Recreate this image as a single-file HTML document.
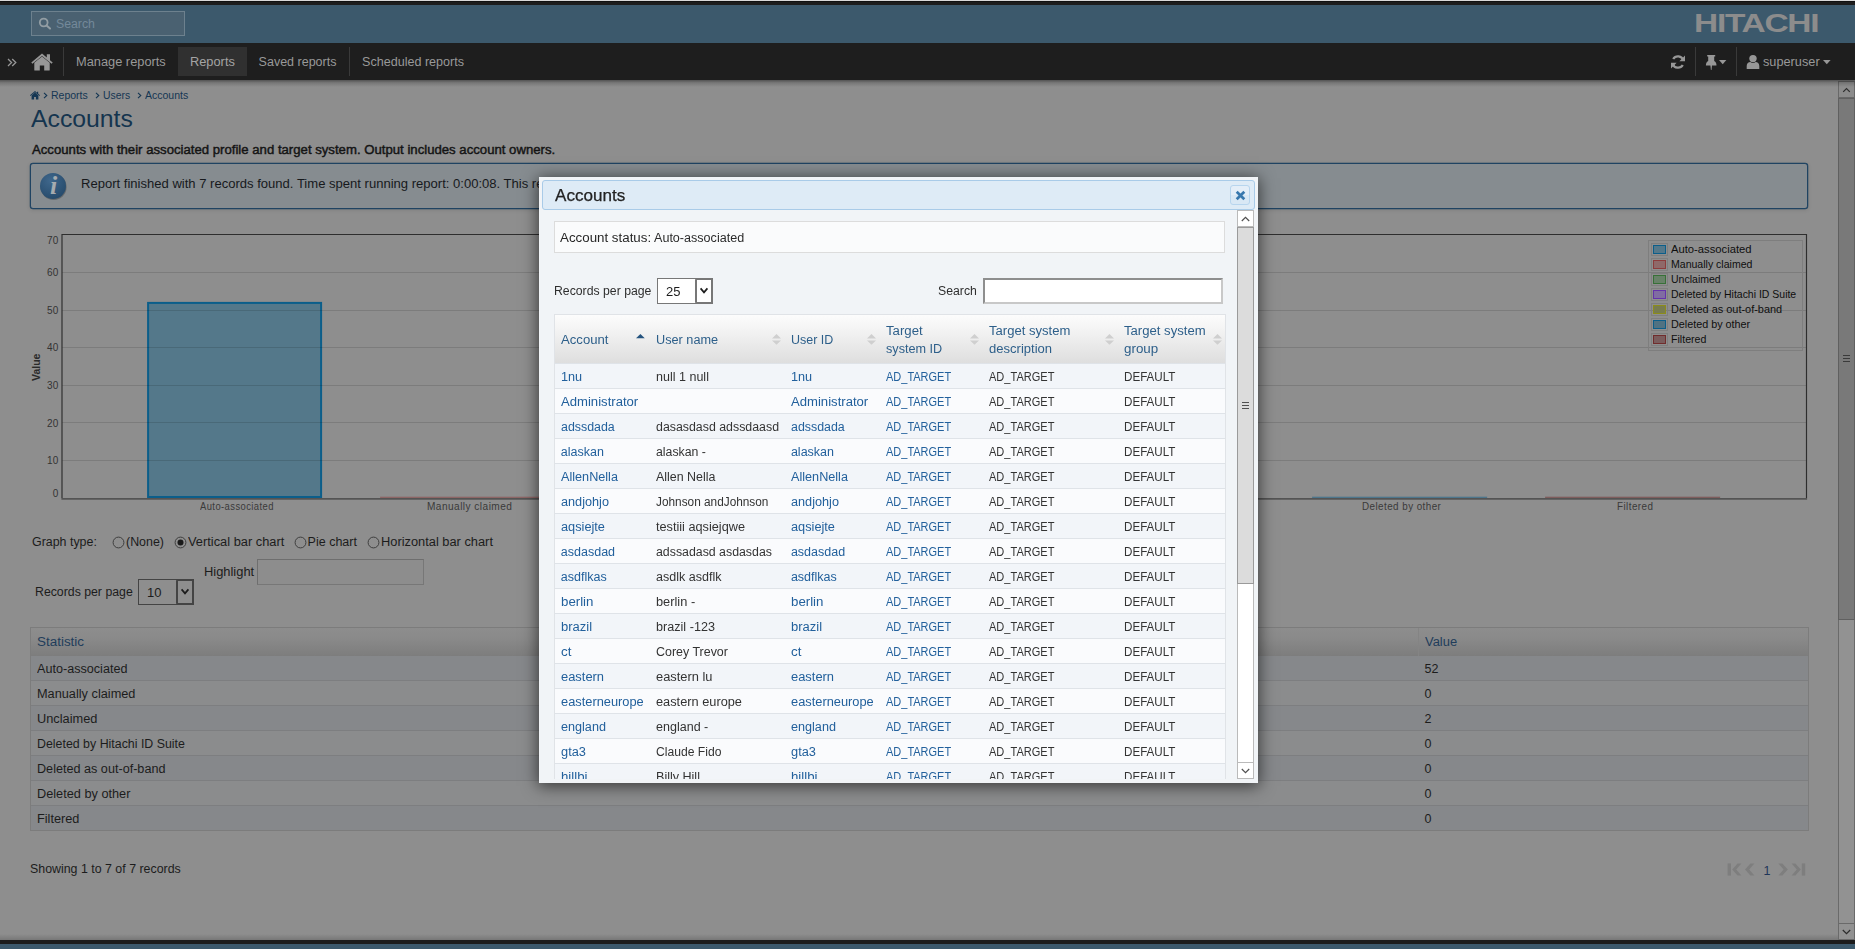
<!DOCTYPE html><html lang="en"><head><meta charset="utf-8"><title>Accounts</title><style>
html,body{margin:0;padding:0}
body{width:1855px;height:949px;overflow:hidden;position:relative;background:#8e8e8e;font-family:"Liberation Sans",sans-serif}
.t{position:absolute;white-space:nowrap;line-height:normal;transform-origin:0 0;display:block}
</style></head><body>
<div style="position:absolute;left:0px;top:0px;width:1855px;height:1px;background:#d9d9d9"></div>
<div style="position:absolute;left:0px;top:1px;width:1855px;height:4px;background:linear-gradient(#111 25%,#1d1d1d 25%)"></div>
<div style="position:absolute;left:0px;top:5px;width:1855px;height:38px;background:#3c596c"></div>
<div style="position:absolute;left:31px;top:11px;width:154px;height:25px;box-sizing:border-box;border:1px solid #6d818e;background:#4a6171"></div>
<svg style="position:absolute;left:38px;top:17px;" width="14" height="13" viewBox="0 0 14 13"><circle cx="5.7" cy="5.5" r="3.9" fill="none" stroke="#929da3" stroke-width="1.8"/><path d="M8.6 8.4 L12 11.6" stroke="#929da3" stroke-width="2" stroke-linecap="round"/></svg>
<span class="t" style="left:56.12px;top:17.00px;font-family:'Liberation Sans',sans-serif;font-size:12.5px;font-weight:400;color:#74899a;transform:scaleX(0.9834);">Search</span>
<span class="t" style="left:1694.21px;top:8.00px;font-family:'Liberation Sans',sans-serif;font-size:26.2px;font-weight:700;color:#8c8c8c;letter-spacing:-1px;transform:scaleX(1.2774);">HITACHI</span>
<div style="position:absolute;left:0px;top:43px;width:1855px;height:37px;background:#1e1e1e"></div>
<svg style="position:absolute;left:7px;top:58px;" width="10" height="9" viewBox="0 0 10 9"><path d="M1 1 L4.6 4.5 L1 8 M5.2 1 L8.8 4.5 L5.2 8" fill="none" stroke="#979797" stroke-width="1.3"/></svg>
<svg style="position:absolute;left:31px;top:53px;" width="22" height="18" viewBox="0 0 22 18"><path fill="#979797" d="M11 3.4 L3.3 9.8 V17 a.6 .6 0 0 0 .6 .6 H8.8 V12.4 H13.2 V17.6 H18.1 a.6 .6 0 0 0 .6 -.6 V9.8 Z"/><path fill="#979797" d="M11 .6 L.3 9.5 L1.4 10.8 L11 2.9 L20.6 10.8 L21.7 9.5 L19 7.2 V1.3 H15.8 V4.6 Z"/></svg>
<div style="position:absolute;left:63px;top:47px;width:1px;height:29px;background:#3a3a3a"></div>
<span class="t" style="left:75.92px;top:55.00px;font-family:'Liberation Sans',sans-serif;font-size:12.5px;font-weight:400;color:#999;transform:scaleX(1.0250);">Manage reports</span>
<div style="position:absolute;left:178px;top:47px;width:69px;height:29px;background:#303030"></div>
<span class="t" style="left:189.82px;top:55.00px;font-family:'Liberation Sans',sans-serif;font-size:12.5px;font-weight:400;color:#a4a4a4;transform:scaleX(1.0244);">Reports</span>
<span class="t" style="left:258.62px;top:55.00px;font-family:'Liberation Sans',sans-serif;font-size:12.5px;font-weight:400;color:#999;">Saved reports</span>
<div style="position:absolute;left:349px;top:47px;width:1px;height:29px;background:#3a3a3a"></div>
<span class="t" style="left:361.62px;top:55.00px;font-family:'Liberation Sans',sans-serif;font-size:12.5px;font-weight:400;color:#999;transform:scaleX(1.0059);">Scheduled reports</span>
<svg style="position:absolute;left:1670px;top:54px;" width="16" height="16" viewBox="0 0 16 16"><g fill="none" stroke="#979797" stroke-width="2.3"><path d="M13.3 6.2 A5.6 5.6 0 0 0 3.2 5.0"/><path d="M2.7 9.8 A5.6 5.6 0 0 0 12.8 11.0"/></g><path fill="#979797" d="M15 1.6 V7.2 H9.4 Z M1 14.4 V8.8 H6.6 Z"/></svg>
<div style="position:absolute;left:1695px;top:47px;width:1px;height:29px;background:#3a3a3a"></div>
<svg style="position:absolute;left:1705px;top:55px;" width="12" height="15" viewBox="0 0 12 15"><path fill="#979797" d="M2.2 0 H10.2 V1.5 H9.2 V6 C10.8 6.8 11.5 8.4 11.5 10.6 H7 L6.5 15 H5.9 L5.4 10.6 H.9 C.9 8.4 1.6 6.8 3.2 6 V1.5 H2.2 Z"/></svg>
<svg style="position:absolute;left:1719px;top:60px;" width="8" height="5" viewBox="0 0 8 5"><path fill="#979797" d="M0 0 H7.4 L3.7 4.2 Z"/></svg>
<div style="position:absolute;left:1736px;top:47px;width:1px;height:29px;background:#3a3a3a"></div>
<svg style="position:absolute;left:1746px;top:54px;" width="14" height="16" viewBox="0 0 14 16"><circle cx="7" cy="4.6" r="3.7" fill="#979797"/><path fill="#979797" d="M.7 15 V12 C.7 9.4 2.4 8 4.4 8 C5.2 8.7 6 9 7 9 C8 9 8.8 8.7 9.6 8 C11.6 8 13.3 9.4 13.3 12 V15 Z"/></svg>
<span class="t" style="left:1763.03px;top:55.00px;font-family:'Liberation Sans',sans-serif;font-size:12.5px;font-weight:400;color:#999;transform:scaleX(1.0190);">superuser</span>
<svg style="position:absolute;left:1823px;top:60px;" width="8" height="5" viewBox="0 0 8 5"><path fill="#979797" d="M0 0 H7.6 L3.8 4.2 Z"/></svg>
<svg style="position:absolute;left:30px;top:91px;" width="10" height="9" viewBox="0 0 10 9"><path fill="#153653" d="M5 1.6 L1.6 4.5 V8.4 H4.1 V5.9 H5.9 V8.4 H8.4 V4.5 Z"/><path fill="#153653" d="M5 .1 L0 4.3 L.6 5 L5 1.3 L9.4 5 L10 4.3 L8.2 2.8 V.7 H7 V1.8 Z"/></svg>
<svg style="position:absolute;left:42.5px;top:92px;" width="5" height="7" viewBox="0 0 5 7"><path d="M1 .8 L3.8 3.5 L1 6.2" fill="none" stroke="#153653" stroke-width="1.1"/></svg>
<span class="t" style="left:50.87px;top:89.00px;font-family:'Liberation Sans',sans-serif;font-size:11px;font-weight:400;color:#153653;transform:scaleX(0.9550);">Reports</span>
<svg style="position:absolute;left:94.5px;top:92px;" width="5" height="7" viewBox="0 0 5 7"><path d="M1 .8 L3.8 3.5 L1 6.2" fill="none" stroke="#153653" stroke-width="1.1"/></svg>
<span class="t" style="left:102.97px;top:89.00px;font-family:'Liberation Sans',sans-serif;font-size:11px;font-weight:400;color:#153653;transform:scaleX(0.9430);">Users</span>
<svg style="position:absolute;left:136.5px;top:92px;" width="5" height="7" viewBox="0 0 5 7"><path d="M1 .8 L3.8 3.5 L1 6.2" fill="none" stroke="#153653" stroke-width="1.1"/></svg>
<span class="t" style="left:144.67px;top:89.00px;font-family:'Liberation Sans',sans-serif;font-size:11px;font-weight:400;color:#153653;transform:scaleX(0.9546);">Accounts</span>
<span class="t" style="left:31.48px;top:105.00px;font-family:'Liberation Sans',sans-serif;font-size:24px;font-weight:400;color:#15354f;transform:scaleX(1.0319);">Accounts</span>
<span class="t" style="left:31.83px;top:143.00px;font-family:'Liberation Sans',sans-serif;font-size:12.5px;font-weight:400;color:#141414;-webkit-text-stroke:.42px #141414;transform:scaleX(1.0532);">Accounts with their associated profile and target system. Output includes account owners.</span>
<div style="position:absolute;left:30px;top:163px;width:1778px;height:46px;box-sizing:border-box;border:1px solid #1f4362;border-radius:3px;background:#868c90;box-shadow:0 0 0 .25px #1f4362,0 1px 4px rgba(0,0,0,.12)"></div>
<svg style="position:absolute;left:39px;top:172px;" width="28" height="28" viewBox="0 0 28 28"><defs><radialGradient id="ig" cx=".4" cy=".3" r=".8"><stop offset="0" stop-color="#3f678c"/><stop offset="1" stop-color="#244868"/></radialGradient></defs><circle cx="14.6" cy="15" r="13" fill="rgba(0,0,0,.25)"/><circle cx="14" cy="14" r="13" fill="url(#ig)"/><text x="14.6" y="22" text-anchor="middle" font-family="Liberation Serif,serif" font-style="italic" font-weight="700" font-size="26" fill="#a6abaf">i</text></svg>
<span class="t" style="left:80.83px;top:177.00px;font-family:'Liberation Sans',sans-serif;font-size:12.5px;font-weight:400;color:#16191c;transform:scaleX(1.0438);">Report finished with 7 records found. Time spent running report: 0:00:08. This report has been saved and can be viewed again later.</span>
<svg style="position:absolute;left:0px;top:0px;" width="1855" height="949" viewBox="0 0 1855 949"><rect x="148.1" y="302.9" width="173" height="194.1" fill="#54788a" stroke="#0b5e8a" stroke-width="2"/><rect x="380.1" y="496.7" width="175" height="1.4" fill="#8c3c3c" opacity=".5"/><rect x="614.1" y="490.5" width="173" height="6.5" fill="#688268" stroke="#377037" stroke-width="2"/><rect x="846.1" y="496.7" width="175" height="1.4" fill="#6432aa" opacity=".5"/><rect x="1079.1" y="496.7" width="175" height="1.4" fill="#8c8c19" opacity=".5"/><rect x="1312.1" y="496.7" width="175" height="1.4" fill="#0c5e8a" opacity=".5"/><rect x="1545.1" y="496.7" width="175" height="1.4" fill="#702c2c" opacity=".5"/><line x1="62" x2="1806.5" y1="272.5" y2="272.5" stroke="rgba(0,0,0,.125)" stroke-width="1"/><line x1="62" x2="1806.5" y1="310.5" y2="310.5" stroke="rgba(0,0,0,.125)" stroke-width="1"/><line x1="62" x2="1806.5" y1="347.5" y2="347.5" stroke="rgba(0,0,0,.125)" stroke-width="1"/><line x1="62" x2="1806.5" y1="385.5" y2="385.5" stroke="rgba(0,0,0,.125)" stroke-width="1"/><line x1="62" x2="1806.5" y1="422.5" y2="422.5" stroke="rgba(0,0,0,.125)" stroke-width="1"/><line x1="62" x2="1806.5" y1="460.5" y2="460.5" stroke="rgba(0,0,0,.125)" stroke-width="1"/><path d="M62 498 V234.5 H1806.5 V498" fill="none" stroke="#2e2e2e" stroke-width="1.15"/><path d="M61.4 498.9 H1807.1" fill="none" stroke="#545454" stroke-width="1.7"/></svg>
<span class="t" style="left:47.08px;top:234.60px;font-family:'Liberation Sans',sans-serif;font-size:10px;font-weight:400;color:#333;">70</span>
<span class="t" style="left:47.08px;top:267.10px;font-family:'Liberation Sans',sans-serif;font-size:10px;font-weight:400;color:#333;">60</span>
<span class="t" style="left:47.08px;top:304.60px;font-family:'Liberation Sans',sans-serif;font-size:10px;font-weight:400;color:#333;">50</span>
<span class="t" style="left:47.08px;top:342.30px;font-family:'Liberation Sans',sans-serif;font-size:10px;font-weight:400;color:#333;">40</span>
<span class="t" style="left:47.08px;top:379.90px;font-family:'Liberation Sans',sans-serif;font-size:10px;font-weight:400;color:#333;">30</span>
<span class="t" style="left:47.08px;top:417.60px;font-family:'Liberation Sans',sans-serif;font-size:10px;font-weight:400;color:#333;">20</span>
<span class="t" style="left:47.08px;top:455.20px;font-family:'Liberation Sans',sans-serif;font-size:10px;font-weight:400;color:#333;">10</span>
<span class="t" style="left:52.64px;top:488.10px;font-family:'Liberation Sans',sans-serif;font-size:10px;font-weight:400;color:#333;">0</span>
<span class="t" style="left:30.2px;top:381.2px;font-size:10.5px;font-weight:700;color:#2a2a2a;transform:rotate(-90deg);transform-origin:0 0">Value</span>
<span class="t" style="left:199.75px;top:501.40px;font-family:'Liberation Sans',sans-serif;font-size:10px;font-weight:400;color:#3a3a3a;letter-spacing:0.45px;transform:scaleX(0.9413);">Auto-associated</span>
<span class="t" style="left:427.00px;top:501.40px;font-family:'Liberation Sans',sans-serif;font-size:10px;font-weight:400;color:#3a3a3a;letter-spacing:0.45px;transform:scaleX(1.0106);">Manually claimed</span>
<span class="t" style="left:677.50px;top:501.40px;font-family:'Liberation Sans',sans-serif;font-size:10px;font-weight:400;color:#3a3a3a;letter-spacing:0.45px;transform:scaleX(0.9817);">Unclaimed</span>
<span class="t" style="left:870.50px;top:501.40px;font-family:'Liberation Sans',sans-serif;font-size:10px;font-weight:400;color:#3a3a3a;letter-spacing:0.45px;transform:scaleX(0.9902);">Deleted by Hitachi ID Suite</span>
<span class="t" style="left:1113.50px;top:501.40px;font-family:'Liberation Sans',sans-serif;font-size:10px;font-weight:400;color:#3a3a3a;letter-spacing:0.45px;transform:scaleX(0.9885);">Deleted as out-of-band</span>
<span class="t" style="left:1362.00px;top:501.40px;font-family:'Liberation Sans',sans-serif;font-size:10px;font-weight:400;color:#3a3a3a;letter-spacing:0.45px;transform:scaleX(0.9847);">Deleted by other</span>
<span class="t" style="left:1616.50px;top:501.40px;font-family:'Liberation Sans',sans-serif;font-size:10px;font-weight:400;color:#3a3a3a;letter-spacing:0.45px;transform:scaleX(0.9839);">Filtered</span>
<div style="position:absolute;left:1648px;top:240px;width:155px;height:111px;box-sizing:border-box;border:1px solid #7e7e7e"></div>
<div style="position:absolute;left:1651px;top:243px;width:17px;height:13px;box-sizing:border-box;border:1px solid #7f7f7f;padding:1px"><div style="box-sizing:border-box;width:100%;height:100%;background:#54788a;border:1px solid #0b5e8a"></div></div>
<span class="t" style="left:1671.27px;top:243.00px;font-family:'Liberation Sans',sans-serif;font-size:11px;font-weight:400;color:#0e0e0e;transform:scaleX(1.0203);">Auto-associated</span>
<div style="position:absolute;left:1651px;top:258px;width:17px;height:13px;box-sizing:border-box;border:1px solid #7f7f7f;padding:1px"><div style="box-sizing:border-box;width:100%;height:100%;background:#8f6969;border:1px solid #8c3c3c"></div></div>
<span class="t" style="left:1671.27px;top:258.00px;font-family:'Liberation Sans',sans-serif;font-size:11px;font-weight:400;color:#0e0e0e;transform:scaleX(0.9578);">Manually claimed</span>
<div style="position:absolute;left:1651px;top:273px;width:17px;height:13px;box-sizing:border-box;border:1px solid #7f7f7f;padding:1px"><div style="box-sizing:border-box;width:100%;height:100%;background:#688268;border:1px solid #377037"></div></div>
<span class="t" style="left:1671.27px;top:273.00px;font-family:'Liberation Sans',sans-serif;font-size:11px;font-weight:400;color:#0e0e0e;transform:scaleX(0.9563);">Unclaimed</span>
<div style="position:absolute;left:1651px;top:288px;width:17px;height:13px;box-sizing:border-box;border:1px solid #7f7f7f;padding:1px"><div style="box-sizing:border-box;width:100%;height:100%;background:#806ca2;border:1px solid #6432aa"></div></div>
<span class="t" style="left:1671.27px;top:288.00px;font-family:'Liberation Sans',sans-serif;font-size:11px;font-weight:400;color:#0e0e0e;transform:scaleX(0.9524);">Deleted by Hitachi ID Suite</span>
<div style="position:absolute;left:1651px;top:303px;width:17px;height:13px;box-sizing:border-box;border:1px solid #7f7f7f;padding:1px"><div style="box-sizing:border-box;width:100%;height:100%;background:#787c4e;border:1px solid #8c8c19"></div></div>
<span class="t" style="left:1671.27px;top:303.00px;font-family:'Liberation Sans',sans-serif;font-size:11px;font-weight:400;color:#0e0e0e;transform:scaleX(0.9935);">Deleted as out-of-band</span>
<div style="position:absolute;left:1651px;top:318px;width:17px;height:13px;box-sizing:border-box;border:1px solid #7f7f7f;padding:1px"><div style="box-sizing:border-box;width:100%;height:100%;background:#507282;border:1px solid #0c5e8a"></div></div>
<span class="t" style="left:1671.27px;top:318.00px;font-family:'Liberation Sans',sans-serif;font-size:11px;font-weight:400;color:#0e0e0e;transform:scaleX(0.9811);">Deleted by other</span>
<div style="position:absolute;left:1651px;top:333px;width:17px;height:13px;box-sizing:border-box;border:1px solid #7f7f7f;padding:1px"><div style="box-sizing:border-box;width:100%;height:100%;background:#7a5c5c;border:1px solid #702c2c"></div></div>
<span class="t" style="left:1671.27px;top:333.00px;font-family:'Liberation Sans',sans-serif;font-size:11px;font-weight:400;color:#0e0e0e;transform:scaleX(0.9648);">Filtered</span>
<span class="t" style="left:32.02px;top:535.40px;font-family:'Liberation Sans',sans-serif;font-size:12.5px;font-weight:400;color:#1c1c1c;transform:scaleX(0.9927);">Graph type:</span>
<svg style="position:absolute;left:111.5px;top:535.5px;" width="13" height="13" viewBox="0 0 13 13"><circle cx="6.5" cy="6.5" r="5.4" fill="#8e8e8e" stroke="#3f3f3f" stroke-width="1"/></svg>
<span class="t" style="left:125.62px;top:535.40px;font-family:'Liberation Sans',sans-serif;font-size:12.5px;font-weight:400;color:#1c1c1c;transform:scaleX(0.9930);">(None)</span>
<svg style="position:absolute;left:173.5px;top:535.5px;" width="13" height="13" viewBox="0 0 13 13"><circle cx="6.5" cy="6.5" r="5.4" fill="#8e8e8e" stroke="#3f3f3f" stroke-width="1"/><circle cx="6.5" cy="6.5" r="3" fill="#1a1a1a"/></svg>
<span class="t" style="left:187.82px;top:535.40px;font-family:'Liberation Sans',sans-serif;font-size:12.5px;font-weight:400;color:#1c1c1c;transform:scaleX(1.0262);">Vertical bar chart</span>
<svg style="position:absolute;left:293.5px;top:535.5px;" width="13" height="13" viewBox="0 0 13 13"><circle cx="6.5" cy="6.5" r="5.4" fill="#8e8e8e" stroke="#3f3f3f" stroke-width="1"/></svg>
<span class="t" style="left:307.62px;top:535.40px;font-family:'Liberation Sans',sans-serif;font-size:12.5px;font-weight:400;color:#1c1c1c;">Pie chart</span>
<svg style="position:absolute;left:366.5px;top:535.5px;" width="13" height="13" viewBox="0 0 13 13"><circle cx="6.5" cy="6.5" r="5.4" fill="#8e8e8e" stroke="#3f3f3f" stroke-width="1"/></svg>
<span class="t" style="left:381.12px;top:535.40px;font-family:'Liberation Sans',sans-serif;font-size:12.5px;font-weight:400;color:#1c1c1c;transform:scaleX(1.0263);">Horizontal bar chart</span>
<span class="t" style="left:203.93px;top:564.70px;font-family:'Liberation Sans',sans-serif;font-size:12.5px;font-weight:400;color:#1c1c1c;transform:scaleX(1.0310);">Highlight</span>
<div style="position:absolute;left:257px;top:559px;width:167px;height:26px;box-sizing:border-box;border:1px solid #777;border-top-color:#6e6e6e;border-left-color:#6e6e6e;background:#8d8d8d"></div>
<span class="t" style="left:34.83px;top:584.60px;font-family:'Liberation Sans',sans-serif;font-size:12.5px;font-weight:400;color:#1c1c1c;transform:scaleX(0.9836);">Records per page</span>
<div style="position:absolute;left:138px;top:579px;width:56px;height:26px;box-sizing:border-box;border:1px solid #444;background:#8e8e8e"></div>
<div style="position:absolute;left:176px;top:579px;width:18px;height:26px;box-sizing:border-box;border:2px solid #444;border-radius:2px;background:#8e8e8e"></div>
<svg style="position:absolute;left:180px;top:588px;" width="10" height="8" viewBox="0 0 10 8"><path d="M1.6 1.4 L5 5.4 L8.4 1.4" fill="none" stroke="#1c1c1c" stroke-width="1.7"/></svg>
<span class="t" style="left:146.91px;top:584.80px;font-family:'Liberation Sans',sans-serif;font-size:13px;font-weight:400;color:#1c1c1c;">10</span>
<div style="position:absolute;left:30px;top:627px;width:1779px;height:204px;box-sizing:border-box;background:#898a8c"></div>
<div style="position:absolute;left:31px;top:628px;width:1777px;height:28px;background:linear-gradient(#8d8d8d,#8a8a8a 35%,#7d7d7d)"></div>
<div style="position:absolute;left:1418px;top:628px;width:1px;height:28px;background:#848484"></div>
<span class="t" style="left:36.62px;top:635.00px;font-family:'Liberation Sans',sans-serif;font-size:12.5px;font-weight:400;color:#1f3d5b;transform:scaleX(1.0750);">Statistic</span>
<span class="t" style="left:1424.62px;top:635.00px;font-family:'Liberation Sans',sans-serif;font-size:12.5px;font-weight:400;color:#1f3d5b;transform:scaleX(1.0355);">Value</span>
<div style="position:absolute;left:31px;top:656px;width:1777px;height:25px;box-sizing:border-box;border-bottom:1px solid #7d7e80;background:#86888b"></div>
<span class="t" style="left:36.62px;top:662.00px;font-family:'Liberation Sans',sans-serif;font-size:12.5px;font-weight:400;color:#1c1c1c;transform:scaleX(1.0090);">Auto-associated</span>
<span class="t" style="left:1424.62px;top:662.00px;font-family:'Liberation Sans',sans-serif;font-size:12.5px;font-weight:400;color:#1c1c1c;">52</span>
<div style="position:absolute;left:31px;top:681px;width:1777px;height:25px;box-sizing:border-box;border-bottom:1px solid #7d7e80;background:#8b8c8d"></div>
<span class="t" style="left:36.62px;top:687.00px;font-family:'Liberation Sans',sans-serif;font-size:12.5px;font-weight:400;color:#1c1c1c;transform:scaleX(1.0194);">Manually claimed</span>
<span class="t" style="left:1424.62px;top:687.00px;font-family:'Liberation Sans',sans-serif;font-size:12.5px;font-weight:400;color:#1c1c1c;">0</span>
<div style="position:absolute;left:31px;top:706px;width:1777px;height:25px;box-sizing:border-box;border-bottom:1px solid #7d7e80;background:#86888b"></div>
<span class="t" style="left:36.62px;top:712.00px;font-family:'Liberation Sans',sans-serif;font-size:12.5px;font-weight:400;color:#1c1c1c;transform:scaleX(1.0235);">Unclaimed</span>
<span class="t" style="left:1424.62px;top:712.00px;font-family:'Liberation Sans',sans-serif;font-size:12.5px;font-weight:400;color:#1c1c1c;">2</span>
<div style="position:absolute;left:31px;top:731px;width:1777px;height:25px;box-sizing:border-box;border-bottom:1px solid #7d7e80;background:#8b8c8d"></div>
<span class="t" style="left:36.62px;top:737.00px;font-family:'Liberation Sans',sans-serif;font-size:12.5px;font-weight:400;color:#1c1c1c;transform:scaleX(0.9904);">Deleted by Hitachi ID Suite</span>
<span class="t" style="left:1424.62px;top:737.00px;font-family:'Liberation Sans',sans-serif;font-size:12.5px;font-weight:400;color:#1c1c1c;">0</span>
<div style="position:absolute;left:31px;top:756px;width:1777px;height:25px;box-sizing:border-box;border-bottom:1px solid #7d7e80;background:#86888b"></div>
<span class="t" style="left:36.62px;top:762.00px;font-family:'Liberation Sans',sans-serif;font-size:12.5px;font-weight:400;color:#1c1c1c;transform:scaleX(1.0101);">Deleted as out-of-band</span>
<span class="t" style="left:1424.62px;top:762.00px;font-family:'Liberation Sans',sans-serif;font-size:12.5px;font-weight:400;color:#1c1c1c;">0</span>
<div style="position:absolute;left:31px;top:781px;width:1777px;height:25px;box-sizing:border-box;border-bottom:1px solid #7d7e80;background:#8b8c8d"></div>
<span class="t" style="left:36.62px;top:787.00px;font-family:'Liberation Sans',sans-serif;font-size:12.5px;font-weight:400;color:#1c1c1c;transform:scaleX(1.0187);">Deleted by other</span>
<span class="t" style="left:1424.62px;top:787.00px;font-family:'Liberation Sans',sans-serif;font-size:12.5px;font-weight:400;color:#1c1c1c;">0</span>
<div style="position:absolute;left:31px;top:806px;width:1777px;height:25px;box-sizing:border-box;border-bottom:1px solid #7d7e80;background:#86888b"></div>
<span class="t" style="left:36.62px;top:812.00px;font-family:'Liberation Sans',sans-serif;font-size:12.5px;font-weight:400;color:#1c1c1c;transform:scaleX(1.0183);">Filtered</span>
<span class="t" style="left:1424.62px;top:812.00px;font-family:'Liberation Sans',sans-serif;font-size:12.5px;font-weight:400;color:#1c1c1c;">0</span>
<div style="position:absolute;left:30px;top:627px;width:1779px;height:204px;box-sizing:border-box;border:1px solid #7c7c7c"></div>
<span class="t" style="left:29.93px;top:862.30px;font-family:'Liberation Sans',sans-serif;font-size:12.5px;font-weight:400;color:#1c1c1c;transform:scaleX(0.9906);">Showing 1 to 7 of 7 records</span>
<svg style="position:absolute;left:1727px;top:863px;" width="80" height="13" viewBox="0 0 80 13"><g fill="#7e7e7e"><rect x=".6" y=".4" width="3.4" height="12.2"/><path d="M10.6 .4 H14.4 L9.2 6.5 L14.4 12.6 H10.6 L5.2 6.5 Z"/><path d="M23.4 .4 H27.4 L22.2 6.5 L27.4 12.6 H23.4 L18 6.5 Z"/><path d="M51.4 .4 H55.4 L60.8 6.5 L55.4 12.6 H51.4 L56.6 6.5 Z"/><path d="M64.6 .4 H68.4 L73.8 6.5 L68.4 12.6 H64.6 L69.8 6.5 Z"/><rect x="74.8" y=".4" width="3.4" height="12.2"/></g></svg>
<span class="t" style="left:1763.42px;top:863.80px;font-family:'Liberation Sans',sans-serif;font-size:12.5px;font-weight:400;color:#1f3558;">1</span>
<div style="position:absolute;left:1838px;top:81px;width:17px;height:859px;box-sizing:border-box;background:#929292;border-left:1px solid #6a6a6a;border-right:1px solid #6a6a6a"></div>
<div style="position:absolute;left:1838px;top:81px;width:17px;height:17px;box-sizing:border-box;border:1px solid #686868;background:#8c8c8c"></div>
<svg style="position:absolute;left:1842px;top:87px;" width="9" height="6" viewBox="0 0 9 6"><path d="M1.2 4.8 L4.5 1.5 L7.8 4.8" fill="none" stroke="#2c2c2c" stroke-width="1.2"/></svg>
<div style="position:absolute;left:1838px;top:98px;width:17px;height:522px;box-sizing:border-box;border:1px solid #606060;background:#797979"></div>
<svg style="position:absolute;left:1843px;top:355px;" width="7" height="7" viewBox="0 0 7 7"><path d="M0 .5 H7 M0 3.5 H7 M0 6.5 H7" stroke="#3a3a3a" stroke-width="1"/></svg>
<div style="position:absolute;left:1838px;top:923px;width:17px;height:17px;box-sizing:border-box;border:1px solid #6a6a6a;background:#929292"></div>
<svg style="position:absolute;left:1842px;top:929px;" width="9" height="6" viewBox="0 0 9 6"><path d="M.8 1 L4.5 4.7 L8.2 1" fill="none" stroke="#2c2c2c" stroke-width="1.2"/></svg>
<div style="position:absolute;left:0px;top:80px;width:1855px;height:7px;background:linear-gradient(rgba(0,0,0,.42),rgba(0,0,0,.16) 40%,rgba(0,0,0,0))"></div>
<div style="position:absolute;left:0px;top:934px;width:1838px;height:6px;background:linear-gradient(rgba(0,0,0,0),rgba(0,0,0,.16))"></div>
<div style="position:absolute;left:0px;top:940px;width:1855px;height:4px;background:#1c1c1c"></div>
<div style="position:absolute;left:0px;top:944px;width:1855px;height:5px;background:#3c596c"></div>
<div style="position:absolute;left:0;top:0;width:1855px;height:949px;will-change:transform">
<div style="position:absolute;left:539px;top:177px;width:719px;height:606px;background:#f1f4f7;box-shadow:0 2px 15px 1px rgba(0,0,0,.6)"></div>
<div style="position:absolute;left:542px;top:180px;width:713px;height:30px;box-sizing:border-box;border:1px solid #a9cbe8;border-radius:3px;background:#deebf6"></div>
<span class="t" style="left:555.12px;top:186.80px;font-family:'Liberation Sans',sans-serif;font-size:16px;font-weight:400;color:#222;-webkit-text-stroke:.25px #222;transform:scaleX(1.0663);">Accounts</span>
<div style="position:absolute;left:1230px;top:185px;width:20px;height:20px;box-sizing:border-box;border:1px solid #b7d5ee;border-radius:3px;background:linear-gradient(#e4eef8 50%,#d9e8f5 50%)"></div>
<svg style="position:absolute;left:1235px;top:190px;" width="11" height="11" viewBox="0 0 11 11"><path d="M1.7 1.7 L9.3 9.3 M9.3 1.7 L1.7 9.3" stroke="#3878ae" stroke-width="2.7"/></svg>
<div style="position:absolute;left:554px;top:221px;width:671px;height:32px;box-sizing:border-box;border:1px solid #dcdcdc;background:#fafbfc"></div>
<span class="t" style="left:559.92px;top:231.00px;font-family:'Liberation Sans',sans-serif;font-size:12.5px;font-weight:400;color:#262626;transform:scaleX(1.0665);">Account status:</span>
<span class="t" style="left:653.92px;top:231.00px;font-family:'Liberation Sans',sans-serif;font-size:12.5px;font-weight:400;color:#2b2b2b;transform:scaleX(1.0057);">Auto-associated</span>
<span class="t" style="left:553.92px;top:284.20px;font-family:'Liberation Sans',sans-serif;font-size:12.5px;font-weight:400;color:#2e2e2e;transform:scaleX(0.9806);">Records per page</span>
<div style="position:absolute;left:657px;top:278px;width:56px;height:26px;box-sizing:border-box;border:1px solid #777;background:#fff"></div>
<div style="position:absolute;left:695px;top:278px;width:18px;height:26px;box-sizing:border-box;border:2px solid #777;border-radius:2px;background:#fff"></div>
<svg style="position:absolute;left:699px;top:287px;" width="10" height="8" viewBox="0 0 10 8"><path d="M1.6 1.4 L5 5.4 L8.4 1.4" fill="none" stroke="#1c1c1c" stroke-width="1.7"/></svg>
<span class="t" style="left:665.91px;top:283.80px;font-family:'Liberation Sans',sans-serif;font-size:13px;font-weight:400;color:#1c1c1c;">25</span>
<span class="t" style="left:938.02px;top:284.20px;font-family:'Liberation Sans',sans-serif;font-size:12.5px;font-weight:400;color:#2e2e2e;transform:scaleX(0.9808);">Search</span>
<div style="position:absolute;left:983px;top:278px;width:240px;height:26px;box-sizing:border-box;border:2px solid;border-color:#8e8e8e #c8c8c8 #c8c8c8 #8e8e8e;background:#fff;box-shadow:inset 0 0 0 0 #000"></div>
<div style="position:absolute;left:0;top:0;width:1855px;height:779px;overflow:hidden">
<div style="position:absolute;left:554px;top:314px;width:672px;height:49px;box-sizing:border-box;border:1px solid #e0e3e7;border-bottom:none;background:linear-gradient(#fcfcfc,#f6f6f6 22%,#e3e3e3 84%,#dedede)"></div>
<span class="t" style="left:560.83px;top:333.00px;font-family:'Liberation Sans',sans-serif;font-size:12.5px;font-weight:400;color:#2d5f8a;transform:scaleX(1.0504);">Account</span>
<span class="t" style="left:656.12px;top:333.00px;font-family:'Liberation Sans',sans-serif;font-size:12.5px;font-weight:400;color:#2d5f8a;transform:scaleX(1.0165);">User name</span>
<span class="t" style="left:790.92px;top:333.00px;font-family:'Liberation Sans',sans-serif;font-size:12.5px;font-weight:400;color:#2d5f8a;">User ID</span>
<span class="t" style="left:885.92px;top:324.20px;font-family:'Liberation Sans',sans-serif;font-size:12.5px;font-weight:400;color:#2d5f8a;transform:scaleX(1.0547);">Target</span>
<span class="t" style="left:885.92px;top:342.20px;font-family:'Liberation Sans',sans-serif;font-size:12.5px;font-weight:400;color:#2d5f8a;transform:scaleX(1.0124);">system ID</span>
<span class="t" style="left:988.92px;top:324.20px;font-family:'Liberation Sans',sans-serif;font-size:12.5px;font-weight:400;color:#2d5f8a;transform:scaleX(1.0455);">Target system</span>
<span class="t" style="left:988.92px;top:342.20px;font-family:'Liberation Sans',sans-serif;font-size:12.5px;font-weight:400;color:#2d5f8a;transform:scaleX(1.0430);">description</span>
<span class="t" style="left:1123.83px;top:324.20px;font-family:'Liberation Sans',sans-serif;font-size:12.5px;font-weight:400;color:#2d5f8a;transform:scaleX(1.0493);">Target system</span>
<span class="t" style="left:1123.83px;top:342.20px;font-family:'Liberation Sans',sans-serif;font-size:12.5px;font-weight:400;color:#2d5f8a;transform:scaleX(1.0708);">group</span>
<svg style="position:absolute;left:636.3px;top:333.8px;" width="9" height="5" viewBox="0 0 9 5"><path d="M0 4.2 L4.4 0 L8.8 4.2 Z" fill="#25547f"/></svg>
<svg style="position:absolute;left:771.5px;top:334px;" width="9" height="11" viewBox="0 0 9 11"><path d="M0 4.4 L4.5 0 L9 4.4 Z M0 6.4 L4.5 10.8 L9 6.4 Z" fill="#cfcfcf"/></svg>
<svg style="position:absolute;left:866.5px;top:334px;" width="9" height="11" viewBox="0 0 9 11"><path d="M0 4.4 L4.5 0 L9 4.4 Z M0 6.4 L4.5 10.8 L9 6.4 Z" fill="#cfcfcf"/></svg>
<svg style="position:absolute;left:969.7px;top:334px;" width="9" height="11" viewBox="0 0 9 11"><path d="M0 4.4 L4.5 0 L9 4.4 Z M0 6.4 L4.5 10.8 L9 6.4 Z" fill="#cfcfcf"/></svg>
<svg style="position:absolute;left:1104.8px;top:334px;" width="9" height="11" viewBox="0 0 9 11"><path d="M0 4.4 L4.5 0 L9 4.4 Z M0 6.4 L4.5 10.8 L9 6.4 Z" fill="#cfcfcf"/></svg>
<svg style="position:absolute;left:1212.5px;top:334px;" width="9" height="11" viewBox="0 0 9 11"><path d="M0 4.4 L4.5 0 L9 4.4 Z M0 6.4 L4.5 10.8 L9 6.4 Z" fill="#cfcfcf"/></svg>
<div style="position:absolute;left:555px;top:363px;width:670px;height:25px;box-sizing:border-box;border-top:1px solid #dfe3e8;background:#f2f5f9"></div>
<span class="t" style="left:560.83px;top:370.00px;font-family:'Liberation Sans',sans-serif;font-size:12.5px;font-weight:400;color:#22609c;transform:scaleX(1.0139);">1nu</span>
<span class="t" style="left:656.12px;top:370.00px;font-family:'Liberation Sans',sans-serif;font-size:12.5px;font-weight:400;color:#333;">null 1 null</span>
<span class="t" style="left:790.92px;top:370.00px;font-family:'Liberation Sans',sans-serif;font-size:12.5px;font-weight:400;color:#22609c;transform:scaleX(1.0139);">1nu</span>
<span class="t" style="left:885.92px;top:370.00px;font-family:'Liberation Sans',sans-serif;font-size:12.5px;font-weight:400;color:#22609c;transform:scaleX(0.8793);">AD_TARGET</span>
<span class="t" style="left:988.92px;top:370.00px;font-family:'Liberation Sans',sans-serif;font-size:12.5px;font-weight:400;color:#333;transform:scaleX(0.8833);">AD_TARGET</span>
<span class="t" style="left:1123.92px;top:370.00px;font-family:'Liberation Sans',sans-serif;font-size:12.5px;font-weight:400;color:#333;transform:scaleX(0.9296);">DEFAULT</span>
<div style="position:absolute;left:555px;top:388px;width:670px;height:25px;box-sizing:border-box;border-top:1px solid #dfe3e8;background:#fafbfd"></div>
<span class="t" style="left:560.83px;top:395.00px;font-family:'Liberation Sans',sans-serif;font-size:12.5px;font-weight:400;color:#22609c;transform:scaleX(1.0490);">Administrator</span>
<span class="t" style="left:790.92px;top:395.00px;font-family:'Liberation Sans',sans-serif;font-size:12.5px;font-weight:400;color:#22609c;transform:scaleX(1.0490);">Administrator</span>
<span class="t" style="left:885.92px;top:395.00px;font-family:'Liberation Sans',sans-serif;font-size:12.5px;font-weight:400;color:#22609c;transform:scaleX(0.8793);">AD_TARGET</span>
<span class="t" style="left:988.92px;top:395.00px;font-family:'Liberation Sans',sans-serif;font-size:12.5px;font-weight:400;color:#333;transform:scaleX(0.8833);">AD_TARGET</span>
<span class="t" style="left:1123.92px;top:395.00px;font-family:'Liberation Sans',sans-serif;font-size:12.5px;font-weight:400;color:#333;transform:scaleX(0.9296);">DEFAULT</span>
<div style="position:absolute;left:555px;top:413px;width:670px;height:25px;box-sizing:border-box;border-top:1px solid #dfe3e8;background:#f2f5f9"></div>
<span class="t" style="left:560.83px;top:420.00px;font-family:'Liberation Sans',sans-serif;font-size:12.5px;font-weight:400;color:#22609c;transform:scaleX(0.9914);">adssdada</span>
<span class="t" style="left:656.12px;top:420.00px;font-family:'Liberation Sans',sans-serif;font-size:12.5px;font-weight:400;color:#333;transform:scaleX(0.9891);">dasasdasd adssdaasd</span>
<span class="t" style="left:790.92px;top:420.00px;font-family:'Liberation Sans',sans-serif;font-size:12.5px;font-weight:400;color:#22609c;transform:scaleX(0.9914);">adssdada</span>
<span class="t" style="left:885.92px;top:420.00px;font-family:'Liberation Sans',sans-serif;font-size:12.5px;font-weight:400;color:#22609c;transform:scaleX(0.8793);">AD_TARGET</span>
<span class="t" style="left:988.92px;top:420.00px;font-family:'Liberation Sans',sans-serif;font-size:12.5px;font-weight:400;color:#333;transform:scaleX(0.8833);">AD_TARGET</span>
<span class="t" style="left:1123.92px;top:420.00px;font-family:'Liberation Sans',sans-serif;font-size:12.5px;font-weight:400;color:#333;transform:scaleX(0.9296);">DEFAULT</span>
<div style="position:absolute;left:555px;top:438px;width:670px;height:25px;box-sizing:border-box;border-top:1px solid #dfe3e8;background:#fafbfd"></div>
<span class="t" style="left:560.83px;top:445.00px;font-family:'Liberation Sans',sans-serif;font-size:12.5px;font-weight:400;color:#22609c;">alaskan</span>
<span class="t" style="left:656.12px;top:445.00px;font-family:'Liberation Sans',sans-serif;font-size:12.5px;font-weight:400;color:#333;transform:scaleX(0.9845);">alaskan -</span>
<span class="t" style="left:790.92px;top:445.00px;font-family:'Liberation Sans',sans-serif;font-size:12.5px;font-weight:400;color:#22609c;">alaskan</span>
<span class="t" style="left:885.92px;top:445.00px;font-family:'Liberation Sans',sans-serif;font-size:12.5px;font-weight:400;color:#22609c;transform:scaleX(0.8793);">AD_TARGET</span>
<span class="t" style="left:988.92px;top:445.00px;font-family:'Liberation Sans',sans-serif;font-size:12.5px;font-weight:400;color:#333;transform:scaleX(0.8833);">AD_TARGET</span>
<span class="t" style="left:1123.92px;top:445.00px;font-family:'Liberation Sans',sans-serif;font-size:12.5px;font-weight:400;color:#333;transform:scaleX(0.9296);">DEFAULT</span>
<div style="position:absolute;left:555px;top:463px;width:670px;height:25px;box-sizing:border-box;border-top:1px solid #dfe3e8;background:#f2f5f9"></div>
<span class="t" style="left:560.83px;top:470.00px;font-family:'Liberation Sans',sans-serif;font-size:12.5px;font-weight:400;color:#22609c;transform:scaleX(1.0119);">AllenNella</span>
<span class="t" style="left:656.12px;top:470.00px;font-family:'Liberation Sans',sans-serif;font-size:12.5px;font-weight:400;color:#333;transform:scaleX(0.9947);">Allen Nella</span>
<span class="t" style="left:790.92px;top:470.00px;font-family:'Liberation Sans',sans-serif;font-size:12.5px;font-weight:400;color:#22609c;transform:scaleX(1.0119);">AllenNella</span>
<span class="t" style="left:885.92px;top:470.00px;font-family:'Liberation Sans',sans-serif;font-size:12.5px;font-weight:400;color:#22609c;transform:scaleX(0.8793);">AD_TARGET</span>
<span class="t" style="left:988.92px;top:470.00px;font-family:'Liberation Sans',sans-serif;font-size:12.5px;font-weight:400;color:#333;transform:scaleX(0.8833);">AD_TARGET</span>
<span class="t" style="left:1123.92px;top:470.00px;font-family:'Liberation Sans',sans-serif;font-size:12.5px;font-weight:400;color:#333;transform:scaleX(0.9296);">DEFAULT</span>
<div style="position:absolute;left:555px;top:488px;width:670px;height:25px;box-sizing:border-box;border-top:1px solid #dfe3e8;background:#fafbfd"></div>
<span class="t" style="left:560.83px;top:495.00px;font-family:'Liberation Sans',sans-serif;font-size:12.5px;font-weight:400;color:#22609c;transform:scaleX(1.0145);">andjohjo</span>
<span class="t" style="left:656.12px;top:495.00px;font-family:'Liberation Sans',sans-serif;font-size:12.5px;font-weight:400;color:#333;transform:scaleX(0.9461);">Johnson andJohnson</span>
<span class="t" style="left:790.92px;top:495.00px;font-family:'Liberation Sans',sans-serif;font-size:12.5px;font-weight:400;color:#22609c;transform:scaleX(1.0145);">andjohjo</span>
<span class="t" style="left:885.92px;top:495.00px;font-family:'Liberation Sans',sans-serif;font-size:12.5px;font-weight:400;color:#22609c;transform:scaleX(0.8793);">AD_TARGET</span>
<span class="t" style="left:988.92px;top:495.00px;font-family:'Liberation Sans',sans-serif;font-size:12.5px;font-weight:400;color:#333;transform:scaleX(0.8833);">AD_TARGET</span>
<span class="t" style="left:1123.92px;top:495.00px;font-family:'Liberation Sans',sans-serif;font-size:12.5px;font-weight:400;color:#333;transform:scaleX(0.9296);">DEFAULT</span>
<div style="position:absolute;left:555px;top:513px;width:670px;height:25px;box-sizing:border-box;border-top:1px solid #dfe3e8;background:#f2f5f9"></div>
<span class="t" style="left:560.83px;top:520.00px;font-family:'Liberation Sans',sans-serif;font-size:12.5px;font-weight:400;color:#22609c;transform:scaleX(1.0199);">aqsiejte</span>
<span class="t" style="left:656.12px;top:520.00px;font-family:'Liberation Sans',sans-serif;font-size:12.5px;font-weight:400;color:#333;transform:scaleX(1.0160);">testiii aqsiejqwe</span>
<span class="t" style="left:790.92px;top:520.00px;font-family:'Liberation Sans',sans-serif;font-size:12.5px;font-weight:400;color:#22609c;transform:scaleX(1.0199);">aqsiejte</span>
<span class="t" style="left:885.92px;top:520.00px;font-family:'Liberation Sans',sans-serif;font-size:12.5px;font-weight:400;color:#22609c;transform:scaleX(0.8793);">AD_TARGET</span>
<span class="t" style="left:988.92px;top:520.00px;font-family:'Liberation Sans',sans-serif;font-size:12.5px;font-weight:400;color:#333;transform:scaleX(0.8833);">AD_TARGET</span>
<span class="t" style="left:1123.92px;top:520.00px;font-family:'Liberation Sans',sans-serif;font-size:12.5px;font-weight:400;color:#333;transform:scaleX(0.9296);">DEFAULT</span>
<div style="position:absolute;left:555px;top:538px;width:670px;height:25px;box-sizing:border-box;border-top:1px solid #dfe3e8;background:#fafbfd"></div>
<span class="t" style="left:560.83px;top:545.00px;font-family:'Liberation Sans',sans-serif;font-size:12.5px;font-weight:400;color:#22609c;">asdasdad</span>
<span class="t" style="left:656.12px;top:545.00px;font-family:'Liberation Sans',sans-serif;font-size:12.5px;font-weight:400;color:#333;transform:scaleX(0.9872);">adssadasd asdasdas</span>
<span class="t" style="left:790.92px;top:545.00px;font-family:'Liberation Sans',sans-serif;font-size:12.5px;font-weight:400;color:#22609c;">asdasdad</span>
<span class="t" style="left:885.92px;top:545.00px;font-family:'Liberation Sans',sans-serif;font-size:12.5px;font-weight:400;color:#22609c;transform:scaleX(0.8793);">AD_TARGET</span>
<span class="t" style="left:988.92px;top:545.00px;font-family:'Liberation Sans',sans-serif;font-size:12.5px;font-weight:400;color:#333;transform:scaleX(0.8833);">AD_TARGET</span>
<span class="t" style="left:1123.92px;top:545.00px;font-family:'Liberation Sans',sans-serif;font-size:12.5px;font-weight:400;color:#333;transform:scaleX(0.9296);">DEFAULT</span>
<div style="position:absolute;left:555px;top:563px;width:670px;height:25px;box-sizing:border-box;border-top:1px solid #dfe3e8;background:#f2f5f9"></div>
<span class="t" style="left:560.83px;top:570.00px;font-family:'Liberation Sans',sans-serif;font-size:12.5px;font-weight:400;color:#22609c;">asdflkas</span>
<span class="t" style="left:656.12px;top:570.00px;font-family:'Liberation Sans',sans-serif;font-size:12.5px;font-weight:400;color:#333;">asdlk asdflk</span>
<span class="t" style="left:790.92px;top:570.00px;font-family:'Liberation Sans',sans-serif;font-size:12.5px;font-weight:400;color:#22609c;">asdflkas</span>
<span class="t" style="left:885.92px;top:570.00px;font-family:'Liberation Sans',sans-serif;font-size:12.5px;font-weight:400;color:#22609c;transform:scaleX(0.8793);">AD_TARGET</span>
<span class="t" style="left:988.92px;top:570.00px;font-family:'Liberation Sans',sans-serif;font-size:12.5px;font-weight:400;color:#333;transform:scaleX(0.8833);">AD_TARGET</span>
<span class="t" style="left:1123.92px;top:570.00px;font-family:'Liberation Sans',sans-serif;font-size:12.5px;font-weight:400;color:#333;transform:scaleX(0.9296);">DEFAULT</span>
<div style="position:absolute;left:555px;top:588px;width:670px;height:25px;box-sizing:border-box;border-top:1px solid #dfe3e8;background:#fafbfd"></div>
<span class="t" style="left:560.83px;top:595.00px;font-family:'Liberation Sans',sans-serif;font-size:12.5px;font-weight:400;color:#22609c;transform:scaleX(1.0612);">berlin</span>
<span class="t" style="left:656.12px;top:595.00px;font-family:'Liberation Sans',sans-serif;font-size:12.5px;font-weight:400;color:#333;transform:scaleX(1.0244);">berlin -</span>
<span class="t" style="left:790.92px;top:595.00px;font-family:'Liberation Sans',sans-serif;font-size:12.5px;font-weight:400;color:#22609c;transform:scaleX(1.0612);">berlin</span>
<span class="t" style="left:885.92px;top:595.00px;font-family:'Liberation Sans',sans-serif;font-size:12.5px;font-weight:400;color:#22609c;transform:scaleX(0.8793);">AD_TARGET</span>
<span class="t" style="left:988.92px;top:595.00px;font-family:'Liberation Sans',sans-serif;font-size:12.5px;font-weight:400;color:#333;transform:scaleX(0.8833);">AD_TARGET</span>
<span class="t" style="left:1123.92px;top:595.00px;font-family:'Liberation Sans',sans-serif;font-size:12.5px;font-weight:400;color:#333;transform:scaleX(0.9296);">DEFAULT</span>
<div style="position:absolute;left:555px;top:613px;width:670px;height:25px;box-sizing:border-box;border-top:1px solid #dfe3e8;background:#f2f5f9"></div>
<span class="t" style="left:560.83px;top:620.00px;font-family:'Liberation Sans',sans-serif;font-size:12.5px;font-weight:400;color:#22609c;transform:scaleX(1.0393);">brazil</span>
<span class="t" style="left:656.12px;top:620.00px;font-family:'Liberation Sans',sans-serif;font-size:12.5px;font-weight:400;color:#333;transform:scaleX(1.0099);">brazil -123</span>
<span class="t" style="left:790.92px;top:620.00px;font-family:'Liberation Sans',sans-serif;font-size:12.5px;font-weight:400;color:#22609c;transform:scaleX(1.0393);">brazil</span>
<span class="t" style="left:885.92px;top:620.00px;font-family:'Liberation Sans',sans-serif;font-size:12.5px;font-weight:400;color:#22609c;transform:scaleX(0.8793);">AD_TARGET</span>
<span class="t" style="left:988.92px;top:620.00px;font-family:'Liberation Sans',sans-serif;font-size:12.5px;font-weight:400;color:#333;transform:scaleX(0.8833);">AD_TARGET</span>
<span class="t" style="left:1123.92px;top:620.00px;font-family:'Liberation Sans',sans-serif;font-size:12.5px;font-weight:400;color:#333;transform:scaleX(0.9296);">DEFAULT</span>
<div style="position:absolute;left:555px;top:638px;width:670px;height:25px;box-sizing:border-box;border-top:1px solid #dfe3e8;background:#fafbfd"></div>
<span class="t" style="left:560.83px;top:645.00px;font-family:'Liberation Sans',sans-serif;font-size:12.5px;font-weight:400;color:#22609c;transform:scaleX(1.0735);">ct</span>
<span class="t" style="left:656.12px;top:645.00px;font-family:'Liberation Sans',sans-serif;font-size:12.5px;font-weight:400;color:#333;transform:scaleX(0.9958);">Corey Trevor</span>
<span class="t" style="left:790.92px;top:645.00px;font-family:'Liberation Sans',sans-serif;font-size:12.5px;font-weight:400;color:#22609c;transform:scaleX(1.0735);">ct</span>
<span class="t" style="left:885.92px;top:645.00px;font-family:'Liberation Sans',sans-serif;font-size:12.5px;font-weight:400;color:#22609c;transform:scaleX(0.8793);">AD_TARGET</span>
<span class="t" style="left:988.92px;top:645.00px;font-family:'Liberation Sans',sans-serif;font-size:12.5px;font-weight:400;color:#333;transform:scaleX(0.8833);">AD_TARGET</span>
<span class="t" style="left:1123.92px;top:645.00px;font-family:'Liberation Sans',sans-serif;font-size:12.5px;font-weight:400;color:#333;transform:scaleX(0.9296);">DEFAULT</span>
<div style="position:absolute;left:555px;top:663px;width:670px;height:25px;box-sizing:border-box;border-top:1px solid #dfe3e8;background:#f2f5f9"></div>
<span class="t" style="left:560.83px;top:670.00px;font-family:'Liberation Sans',sans-serif;font-size:12.5px;font-weight:400;color:#22609c;transform:scaleX(1.0323);">eastern</span>
<span class="t" style="left:656.12px;top:670.00px;font-family:'Liberation Sans',sans-serif;font-size:12.5px;font-weight:400;color:#333;transform:scaleX(1.0281);">eastern lu</span>
<span class="t" style="left:790.92px;top:670.00px;font-family:'Liberation Sans',sans-serif;font-size:12.5px;font-weight:400;color:#22609c;transform:scaleX(1.0323);">eastern</span>
<span class="t" style="left:885.92px;top:670.00px;font-family:'Liberation Sans',sans-serif;font-size:12.5px;font-weight:400;color:#22609c;transform:scaleX(0.8793);">AD_TARGET</span>
<span class="t" style="left:988.92px;top:670.00px;font-family:'Liberation Sans',sans-serif;font-size:12.5px;font-weight:400;color:#333;transform:scaleX(0.8833);">AD_TARGET</span>
<span class="t" style="left:1123.92px;top:670.00px;font-family:'Liberation Sans',sans-serif;font-size:12.5px;font-weight:400;color:#333;transform:scaleX(0.9296);">DEFAULT</span>
<div style="position:absolute;left:555px;top:688px;width:670px;height:25px;box-sizing:border-box;border-top:1px solid #dfe3e8;background:#fafbfd"></div>
<span class="t" style="left:560.83px;top:695.00px;font-family:'Liberation Sans',sans-serif;font-size:12.5px;font-weight:400;color:#22609c;transform:scaleX(1.0264);">easterneurope</span>
<span class="t" style="left:656.12px;top:695.00px;font-family:'Liberation Sans',sans-serif;font-size:12.5px;font-weight:400;color:#333;transform:scaleX(1.0221);">eastern europe</span>
<span class="t" style="left:790.92px;top:695.00px;font-family:'Liberation Sans',sans-serif;font-size:12.5px;font-weight:400;color:#22609c;transform:scaleX(1.0264);">easterneurope</span>
<span class="t" style="left:885.92px;top:695.00px;font-family:'Liberation Sans',sans-serif;font-size:12.5px;font-weight:400;color:#22609c;transform:scaleX(0.8793);">AD_TARGET</span>
<span class="t" style="left:988.92px;top:695.00px;font-family:'Liberation Sans',sans-serif;font-size:12.5px;font-weight:400;color:#333;transform:scaleX(0.8833);">AD_TARGET</span>
<span class="t" style="left:1123.92px;top:695.00px;font-family:'Liberation Sans',sans-serif;font-size:12.5px;font-weight:400;color:#333;transform:scaleX(0.9296);">DEFAULT</span>
<div style="position:absolute;left:555px;top:713px;width:670px;height:25px;box-sizing:border-box;border-top:1px solid #dfe3e8;background:#f2f5f9"></div>
<span class="t" style="left:560.83px;top:720.00px;font-family:'Liberation Sans',sans-serif;font-size:12.5px;font-weight:400;color:#22609c;transform:scaleX(1.0101);">england</span>
<span class="t" style="left:656.12px;top:720.00px;font-family:'Liberation Sans',sans-serif;font-size:12.5px;font-weight:400;color:#333;">england -</span>
<span class="t" style="left:790.92px;top:720.00px;font-family:'Liberation Sans',sans-serif;font-size:12.5px;font-weight:400;color:#22609c;transform:scaleX(1.0101);">england</span>
<span class="t" style="left:885.92px;top:720.00px;font-family:'Liberation Sans',sans-serif;font-size:12.5px;font-weight:400;color:#22609c;transform:scaleX(0.8793);">AD_TARGET</span>
<span class="t" style="left:988.92px;top:720.00px;font-family:'Liberation Sans',sans-serif;font-size:12.5px;font-weight:400;color:#333;transform:scaleX(0.8833);">AD_TARGET</span>
<span class="t" style="left:1123.92px;top:720.00px;font-family:'Liberation Sans',sans-serif;font-size:12.5px;font-weight:400;color:#333;transform:scaleX(0.9296);">DEFAULT</span>
<div style="position:absolute;left:555px;top:738px;width:670px;height:25px;box-sizing:border-box;border-top:1px solid #dfe3e8;background:#fafbfd"></div>
<span class="t" style="left:560.83px;top:745.00px;font-family:'Liberation Sans',sans-serif;font-size:12.5px;font-weight:400;color:#22609c;transform:scaleX(1.0249);">gta3</span>
<span class="t" style="left:656.12px;top:745.00px;font-family:'Liberation Sans',sans-serif;font-size:12.5px;font-weight:400;color:#333;transform:scaleX(0.9710);">Claude Fido</span>
<span class="t" style="left:790.92px;top:745.00px;font-family:'Liberation Sans',sans-serif;font-size:12.5px;font-weight:400;color:#22609c;transform:scaleX(1.0249);">gta3</span>
<span class="t" style="left:885.92px;top:745.00px;font-family:'Liberation Sans',sans-serif;font-size:12.5px;font-weight:400;color:#22609c;transform:scaleX(0.8793);">AD_TARGET</span>
<span class="t" style="left:988.92px;top:745.00px;font-family:'Liberation Sans',sans-serif;font-size:12.5px;font-weight:400;color:#333;transform:scaleX(0.8833);">AD_TARGET</span>
<span class="t" style="left:1123.92px;top:745.00px;font-family:'Liberation Sans',sans-serif;font-size:12.5px;font-weight:400;color:#333;transform:scaleX(0.9296);">DEFAULT</span>
<div style="position:absolute;left:555px;top:763px;width:670px;height:25px;box-sizing:border-box;border-top:1px solid #dfe3e8;background:#f2f5f9"></div>
<span class="t" style="left:560.83px;top:770.00px;font-family:'Liberation Sans',sans-serif;font-size:12.5px;font-weight:400;color:#22609c;transform:scaleX(1.0573);">hillbi</span>
<span class="t" style="left:656.12px;top:770.00px;font-family:'Liberation Sans',sans-serif;font-size:12.5px;font-weight:400;color:#333;transform:scaleX(1.0046);">Billy Hill</span>
<span class="t" style="left:790.92px;top:770.00px;font-family:'Liberation Sans',sans-serif;font-size:12.5px;font-weight:400;color:#22609c;transform:scaleX(1.0573);">hillbi</span>
<span class="t" style="left:885.92px;top:770.00px;font-family:'Liberation Sans',sans-serif;font-size:12.5px;font-weight:400;color:#22609c;transform:scaleX(0.8793);">AD_TARGET</span>
<span class="t" style="left:988.92px;top:770.00px;font-family:'Liberation Sans',sans-serif;font-size:12.5px;font-weight:400;color:#333;transform:scaleX(0.8833);">AD_TARGET</span>
<span class="t" style="left:1123.92px;top:770.00px;font-family:'Liberation Sans',sans-serif;font-size:12.5px;font-weight:400;color:#333;transform:scaleX(0.9296);">DEFAULT</span>
<div style="position:absolute;left:554px;top:363px;width:1px;height:420px;background:#e0e3e7"></div>
<div style="position:absolute;left:1225px;top:363px;width:1px;height:420px;background:#e0e3e7"></div>
</div>
<div style="position:absolute;left:1237px;top:210px;width:17px;height:569px;box-sizing:border-box;background:#fff;border-left:1px solid #bababa;border-right:1px solid #bababa"></div>
<div style="position:absolute;left:1237px;top:210px;width:17px;height:17px;box-sizing:border-box;border:1px solid #bababa;background:#fff"></div>
<svg style="position:absolute;left:1241px;top:216px;" width="9" height="6" viewBox="0 0 9 6"><path d="M.8 5 L4.5 1.3 L8.2 5" fill="none" stroke="#505050" stroke-width="1.2"/></svg>
<div style="position:absolute;left:1237px;top:227px;width:17px;height:357px;box-sizing:border-box;border:1px solid #9a9a9a;background:#dcdcdc"></div>
<svg style="position:absolute;left:1242px;top:401.5px;" width="7" height="7" viewBox="0 0 7 7"><path d="M0 .5 H7 M0 3.5 H7 M0 6.5 H7" stroke="#505050" stroke-width="1.1"/></svg>
<div style="position:absolute;left:1237px;top:762px;width:17px;height:17px;box-sizing:border-box;border:1px solid #bababa;background:#fff"></div>
<svg style="position:absolute;left:1241px;top:768px;" width="9" height="6" viewBox="0 0 9 6"><path d="M.8 1 L4.5 4.7 L8.2 1" fill="none" stroke="#505050" stroke-width="1.2"/></svg>
</div>
</body></html>
